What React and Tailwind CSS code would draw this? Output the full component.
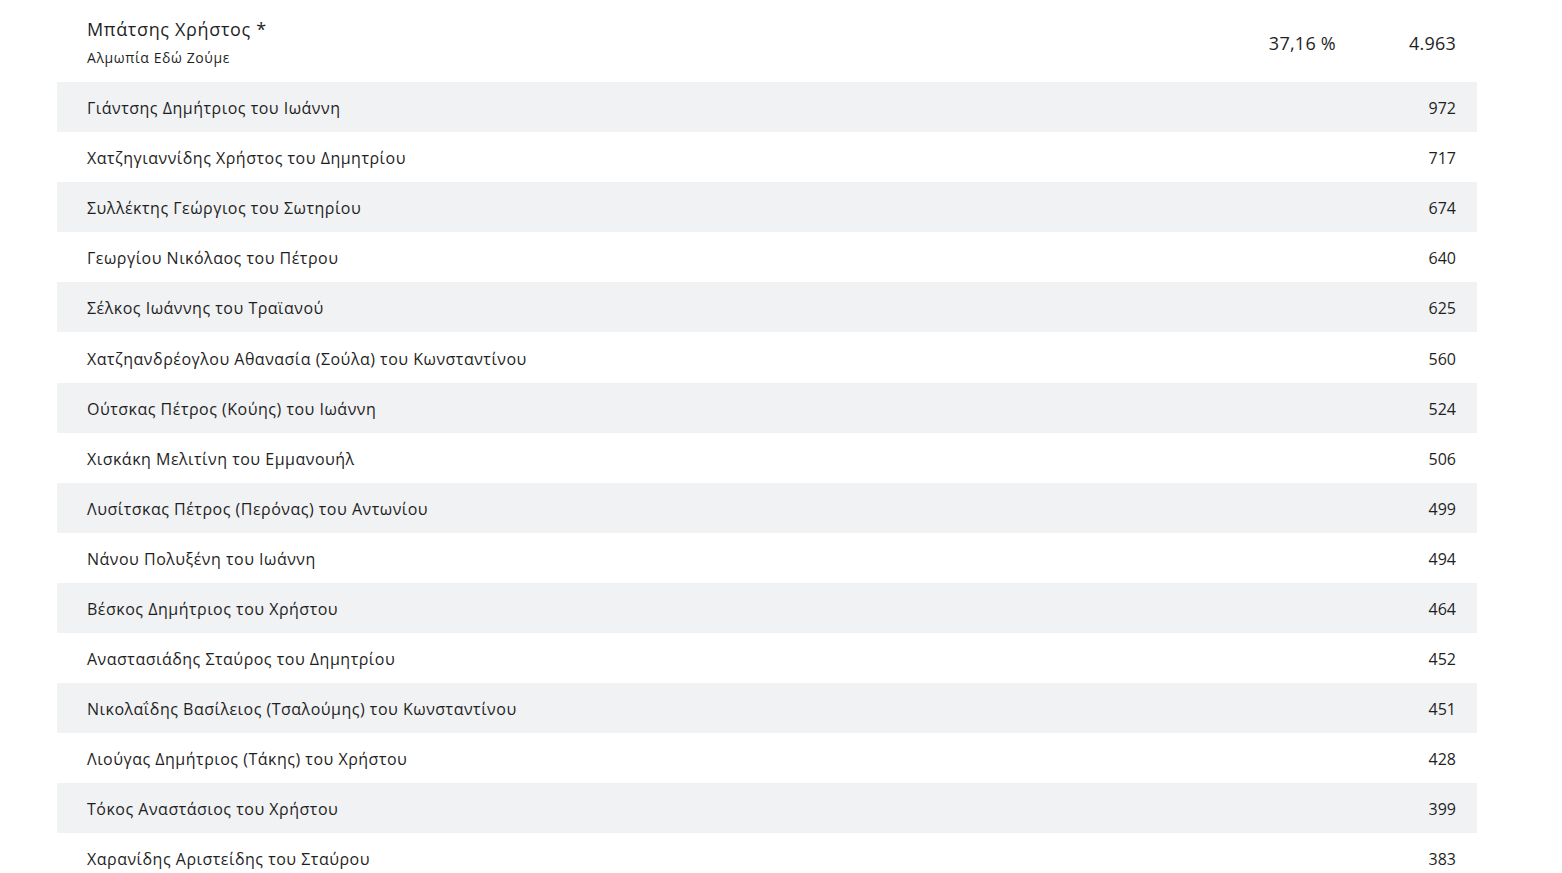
const candidates = [
  { name: 'Γιάντσης Δημήτριος του Ιωάννη', votes: '972' },
  { name: 'Χατζηγιαννίδης Χρήστος του Δημητρίου', votes: '717' },
  { name: 'Συλλέκτης Γεώργιος του Σωτηρίου', votes: '674' },
  { name: 'Γεωργίου Νικόλαος του Πέτρου', votes: '640' },
  { name: 'Σέλκος Ιωάννης του Τραϊανού', votes: '625' },
  { name: 'Χατζηανδρέογλου Αθανασία (Σούλα) του Κωνσταντίνου', votes: '560' },
  { name: 'Ούτσκας Πέτρος (Κούης) του Ιωάννη', votes: '524' },
  { name: 'Χισκάκη Μελιτίνη του Εμμανουήλ', votes: '506' },
  { name: 'Λυσίτσκας Πέτρος (Περόνας) του Αντωνίου', votes: '499' },
  { name: 'Νάνου Πολυξένη του Ιωάννη', votes: '494' },
  { name: 'Βέσκος Δημήτριος του Χρήστου', votes: '464' },
  { name: 'Αναστασιάδης Σταύρος του Δημητρίου', votes: '452' },
  { name: 'Νικολαΐδης Βασίλειος (Τσαλούμης) του Κωνσταντίνου', votes: '451' },
  { name: 'Λιούγας Δημήτριος (Τάκης) του Χρήστου', votes: '428' },
  { name: 'Τόκος Αναστάσιος του Χρήστου', votes: '399' },
  { name: 'Χαρανίδης Αριστείδης του Σταύρου', votes: '383' },
];

function App() {
  return (
    <div className="h-[873px] overflow-hidden bg-white text-[#1f1f1f] font-['Open_Sans',sans-serif]">
      <div className="ml-[57px] w-[1420px]">
        <div className="flex h-[82px] items-center pl-[30px] pr-[21px]">
          <div className="flex-1">
            <div className="text-[18px] leading-[26px] tracking-[0.65px]">Μπάτσης Χρήστος *</div>
            <div className="mt-[7px] text-[14px] leading-[18px] tracking-[0.6px]">Αλμωπία Εδώ Ζούμε</div>
          </div>
          <div className="mt-[5px] text-[18px] tracking-[0.25px]">37,16 %</div>
          <div className="mt-[5px] w-[120px] text-right text-[18px] tracking-[0.2px]">4.963</div>
        </div>
        {candidates.map((c, i) => (
          <div
            key={c.name}
            className={`flex h-[50.1px] items-center pl-[30px] pr-[21px] pt-[2px] text-[16px] tracking-[0.5px] ${i % 2 === 0 ? 'bg-[#f1f2f4]' : 'bg-white'}`}
          >
            <div className="flex-1">{c.name}</div>
            <div className="tracking-normal">{c.votes}</div>
          </div>
        ))}
      </div>
    </div>
  );
}

export default App;
